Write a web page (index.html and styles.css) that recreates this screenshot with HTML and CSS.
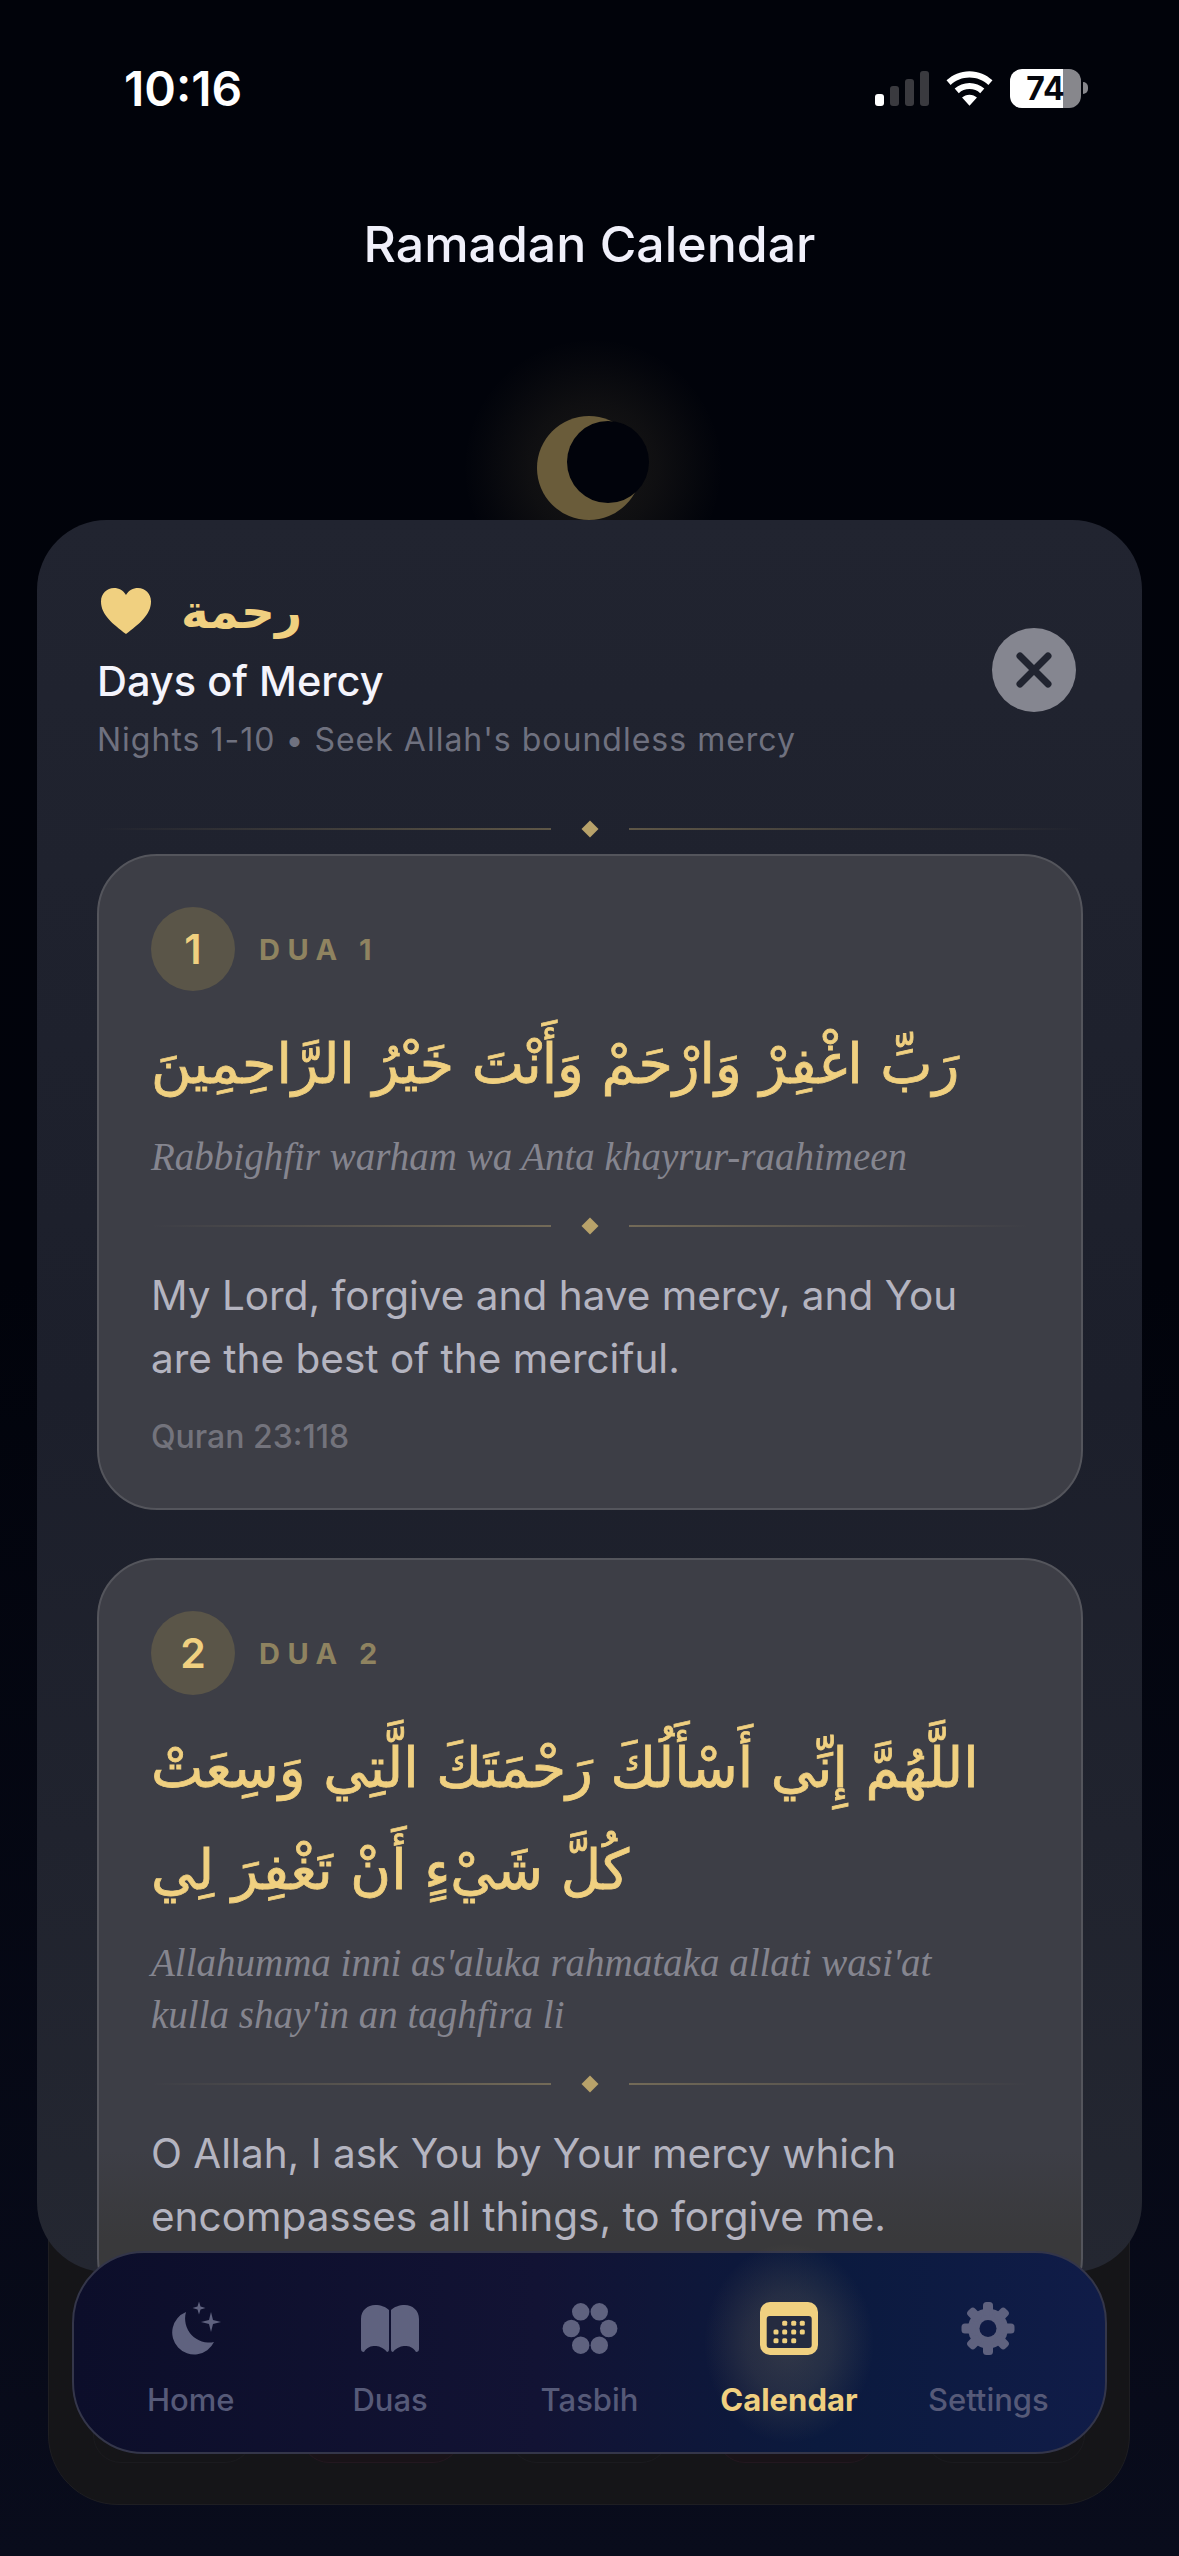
FILE: index.html
```html
<!DOCTYPE html>
<html lang="en">
<head>
    <meta charset="UTF-8">
    <meta name="viewport" content="width=device-width, initial-scale=1.0">
    <title>Ramadan Calendar</title>
    <link rel="stylesheet" href="styles.css">
</head>
<body>
    <div class="screen">
        <div class="status-bar">
            <span class="status-time">10:16</span>
            <div class="status-icons">
                <div class="signal">
                    <span class="bar bar-on bar-1"></span>
                    <span class="bar bar-2"></span>
                    <span class="bar bar-3"></span>
                    <span class="bar bar-4"></span>
                </div>
                <svg class="wifi" viewBox="0 0 46 34"><path fill="#fff" d="M23 0C14 0 6.500 3.400 0.500 9l4 4.500C9.500 9 16 6.300 23 6.300S36.500 9 41.500 13.500l4-4.500C39.500 3.400 32 0 23 0zM23 11.500c-5.600 0-10.500 2-14.500 5.600l4 4.500c2.800-2.500 6.400-4 10.500-4s7.700 1.500 10.500 4l4-4.500C33.500 13.500 28.600 11.500 23 11.500zM23 23c-2.900 0-5.400 1-7.300 2.800L23 34l7.300-8.200C28.400 24 25.900 23 23 23z"/></svg>
                <div class="battery"><span class="battery-num">74</span></div>
                <span class="battery-cap"></span>
            </div>
        </div>
        <h1 class="page-title">Ramadan Calendar</h1>
        <div class="moon-wrap">
            <div class="moon-glow"></div>
            <div class="moon"></div>
            <div class="moon-cut"></div>
        </div>

        <div class="back-sheet">
            <div class="ghost-row">
                <span class="ghost"></span>
                <span class="ghost ghost-pink"></span>
                <span class="ghost"></span>
                <span class="ghost ghost-pink"></span>
                <span class="ghost"></span>
            </div>
        </div>

        <div class="sheet">
            <div class="sheet-head">
                <div class="sheet-info">
                    <div class="sheet-arabic">
                        <svg class="heart" viewBox="0 0 50 46"><path fill="#f0d080" d="M25 46C12 36 0 27 0 13.500 0 5.500 6 0 13 0c5 0 9.500 2.500 12 7 2.500-4.500 7-7 12-7 7 0 13 5.500 13 13.500C50 27 38 36 25 46z"/></svg>
                        <span class="arabic-word" lang="ar" dir="rtl">رحمة</span>
                    </div>
                    <div class="sheet-title">Days of Mercy</div>
                    <div class="sheet-sub">Nights 1-10 • Seek Allah's boundless mercy</div>
                </div>
                <button class="close-btn">
                    <svg viewBox="0 0 36 36"><path d="M4 4L32 32M32 4L4 32" stroke="#212430" stroke-width="7" stroke-linecap="round"/></svg>
                </button>
            </div>
            <div class="divider sheet-divider"><span class="line line-l"></span><span class="diamond"></span><span class="line line-r"></span></div>

            <div class="dua-card">
                <div class="dua-head"><span class="dua-num">1</span><span class="dua-label">DUA 1</span></div>
                <p class="dua-arabic" lang="ar" dir="rtl">رَبِّ اغْفِرْ وَارْحَمْ وَأَنْتَ خَيْرُ الرَّاحِمِينَ</p>
                <p class="dua-translit">Rabbighfir warham wa Anta khayrur-raahimeen</p>
                <div class="divider"><span class="line line-l"></span><span class="diamond"></span><span class="line line-r"></span></div>
                <p class="dua-text">My Lord, forgive and have mercy, and You are the best of the merciful.</p>
                <p class="dua-ref">Quran 23:118</p>
            </div>

            <div class="dua-card dua-card-cut">
                <div class="dua-head"><span class="dua-num">2</span><span class="dua-label">DUA 2</span></div>
                <p class="dua-arabic" lang="ar" dir="rtl">اللَّهُمَّ إِنِّي أَسْأَلُكَ رَحْمَتَكَ الَّتِي وَسِعَتْ كُلَّ شَيْءٍ أَنْ تَغْفِرَ لِي</p>
                <p class="dua-translit">Allahumma inni as'aluka rahmataka allati wasi'at kulla shay'in an taghfira li</p>
                <div class="divider"><span class="line line-l"></span><span class="diamond"></span><span class="line line-r"></span></div>
                <p class="dua-text">O Allah, I ask You by Your mercy which encompasses all things, to forgive me.</p>
            </div>
        </div>

        <nav class="tab-bar">
            <div class="tab">
                <svg class="tab-icon" viewBox="0 0 60 56"><path fill="#5f627f" d="M25 11A22 22 0 1 0 53 41A24 24 0 0 1 25 11Z"/><path fill="#5f627f" d="M38 .5L39.500 5.500L44.500 7L39.500 8.500L38 13.500L36.500 8.500L31.500 7L36.500 5.500ZM50 11L52 19L60 21L52 23L50 31L48 23L40 21L48 19Z"/></svg>
                <span class="tab-label">Home</span>
            </div>
            <div class="tab">
                <svg class="tab-icon" viewBox="0 0 60 56"><g fill="#5f627f" transform="translate(1 4)"><path d="M3 47Q0 47 0 44V14C0 5 7 0 14 0C20 0 25 2 28 5V44Q28 47 26 47C22 42 17 41 14 41C10 41 6 42 3 47Z"/><path d="M55 47Q58 47 58 44V14C58 5 51 0 44 0C38 0 33 2 30 5V44Q30 47 32 47C36 42 41 41 44 41C48 41 52 42 55 47Z"/></g></svg>
                <span class="tab-label">Duas</span>
            </div>
            <div class="tab">
                <svg class="tab-icon" viewBox="0 0 60 56" fill="#5f627f"><circle cx="20.700" cy="10.800" r="8.700"/><circle cx="39.300" cy="10.800" r="8.700"/><circle cx="11.300" cy="27.500" r="8.700"/><circle cx="48.700" cy="27.500" r="8.700"/><circle cx="20.700" cy="44.200" r="8.700"/><circle cx="39.300" cy="44.200" r="8.700"/></svg>
                <span class="tab-label">Tasbih</span>
            </div>
            <div class="tab tab-active">
                <span class="tab-glow"></span>
                <svg class="tab-icon" viewBox="0 0 60 56"><rect x="1" y="1" width="58" height="53" rx="10" fill="#f0d080"/><rect x="7.700" y="15" width="45" height="32" rx="3" fill="#252b40"/><g fill="#f0d080"><rect x="23.200" y="19.800" width="5" height="5" rx="1.500"/><rect x="32.200" y="19.800" width="5" height="5" rx="1.500"/><rect x="40.800" y="19.800" width="5" height="5" rx="1.500"/><rect x="14.500" y="28.500" width="5" height="5" rx="1.500"/><rect x="23.200" y="28.500" width="5" height="5" rx="1.500"/><rect x="32.200" y="28.500" width="5" height="5" rx="1.500"/><rect x="40.800" y="28.500" width="5" height="5" rx="1.500"/><rect x="14.500" y="37.200" width="5" height="5" rx="1.500"/><rect x="23.200" y="37.200" width="5" height="5" rx="1.500"/><rect x="32.200" y="37.200" width="5" height="5" rx="1.500"/></g></svg>
                <span class="tab-label">Calendar</span>
            </div>
            <div class="tab">
                <svg class="tab-icon" viewBox="0 0 60 56"><g fill="#5f627f"><circle cx="30" cy="27.500" r="20"/><rect x="25" y="1" width="10" height="14" rx="3.500"/><rect x="25" y="1" width="10" height="14" rx="3.500" transform="rotate(45 30 27.500)"/><rect x="25" y="1" width="10" height="14" rx="3.500" transform="rotate(90 30 27.500)"/><rect x="25" y="1" width="10" height="14" rx="3.500" transform="rotate(135 30 27.500)"/><rect x="25" y="1" width="10" height="14" rx="3.500" transform="rotate(180 30 27.500)"/><rect x="25" y="1" width="10" height="14" rx="3.500" transform="rotate(225 30 27.500)"/><rect x="25" y="1" width="10" height="14" rx="3.500" transform="rotate(270 30 27.500)"/><rect x="25" y="1" width="10" height="14" rx="3.500" transform="rotate(315 30 27.500)"/></g><circle cx="30" cy="27.500" r="8.500" fill="#0f1a44"/></svg>
                <span class="tab-label">Settings</span>
            </div>
        </nav>
    </div>
</body>
</html>
```

FILE: styles.css
```css
* {
    box-sizing: border-box;
}

html, body {
    margin: 0;
    padding: 0;
}

body {
    width: 1179px;
    height: 2556px;
    overflow: hidden;
    font-family: Inter, "Noto Sans", sans-serif;
    background: #02030b;
}

.screen {
    position: relative;
    width: 1179px;
    height: 2556px;
    overflow: hidden;
    background: linear-gradient(180deg, #01030a 0%, #01030b 50%, #090c1c 100%);
}

/* status bar */
.status-bar {
    display: flex;
    justify-content: space-between;
    align-items: center;
    height: 54px;
    margin-top: 61px;
    padding: 0 91px 0 124px;
}

.status-time {
    font-size: 48px;
    font-weight: 600;
    color: #fff;
}

.status-icons {
    display: flex;
    align-items: center;
}

.signal {
    display: flex;
    align-items: flex-end;
    gap: 6px;
    height: 35px;
    margin-right: 17px;
}

.bar {
    width: 9px;
    border-radius: 3px;
    background: #3a3a3f;
}

.bar-on { background: #fff; }
.bar-1 { height: 12px; }
.bar-2 { height: 20px; }
.bar-3 { height: 27px; }
.bar-4 { height: 35px; }

.wifi {
    width: 47px;
    height: 35px;
    margin-right: 17px;
}

.battery {
    width: 71px;
    height: 39px;
    border-radius: 12px;
    background: linear-gradient(90deg, #fff 0 74.600%, #87878c 74.600% 100%);
    display: flex;
    align-items: center;
    justify-content: center;
}

.battery-num {
    font-size: 32px;
    font-weight: 700;
    color: #05060c;
}

.battery-cap {
    width: 5px;
    height: 12px;
    margin-left: 2px;
    border-radius: 0 5px 5px 0;
    background: #87878c;
}

.page-title {
    margin: 0;
    padding-top: 99px;
    text-align: center;
    font-size: 50px;
    line-height: 60px;
    font-weight: 500;
    color: #f0f0fa;
}

/* crescent */
.moon-wrap {
    position: absolute;
    left: 537px;
    top: 416px;
    width: 112px;
    height: 104px;
}

.moon-glow {
    position: absolute;
    left: -74px;
    top: -78px;
    width: 260px;
    height: 260px;
    border-radius: 50%;
    background: radial-gradient(closest-side, rgba(240,208,128,0.1) 0%, rgba(240,208,128,0.06) 50%, rgba(240,208,128,0.015) 85%, rgba(240,208,128,0) 100%);
}

.moon {
    position: absolute;
    left: 0;
    top: 0;
    width: 104px;
    height: 104px;
    border-radius: 50%;
    background: #6a5c3a;
}

.moon-cut {
    position: absolute;
    left: 30px;
    top: 5px;
    width: 82px;
    height: 82px;
    border-radius: 50%;
    background: #01030b;
}

/* sheet behind the dialog */
.back-sheet {
    position: absolute;
    left: 48px;
    top: 1900px;
    width: 1082px;
    height: 605px;
    border-radius: 70px;
    border: 1px solid #1e1e22;
    background: #151518;
}

.ghost-row {
    display: flex;
    justify-content: space-between;
    padding: 0 44px;
    height: 562px;
}

.ghost {
    width: 160px;
    height: 100%;
    border-radius: 28px;
    border: 1px solid #1b1b1f;
}

.ghost-pink {
    border-color: #231820;
    background: #191318;
}

/* dialog */
.sheet {
    position: absolute;
    left: 37px;
    top: 520px;
    width: 1105px;
    height: 1752px;
    padding: 59px 59px 0 60px;
    border-radius: 70px;
    overflow: hidden;
    background: linear-gradient(180deg, #212430 0%, #1c1f2b 50%, #242731 100%);
}

.sheet-head {
    display: flex;
    justify-content: space-between;
    align-items: center;
    padding-right: 7px;
}

.sheet-arabic {
    display: flex;
    align-items: center;
    gap: 30px;
    height: 64px;
    padding-left: 4px;
}

.heart {
    width: 50px;
    height: 46px;
}

.arabic-word {
    font-family: "DejaVu Sans", sans-serif;
    font-size: 47px;
    font-weight: 700;
    color: #f0d080;
}

.sheet-title {
    margin-top: 14px;
    font-size: 41.500px;
    line-height: 48px;
    font-weight: 500;
    color: #f4f4fc;
}

.sheet-sub {
    margin-top: 15px;
    font-size: 32px;
    line-height: 40px;
    letter-spacing: 1px;
    color: #6f717f;
}

.close-btn {
    width: 84px;
    height: 84px;
    padding: 24px;
    border: none;
    border-radius: 50%;
    background: #858690;
    display: flex;
    align-items: center;
    justify-content: center;
}

.close-btn svg {
    width: 36px;
    height: 36px;
    flex: none;
}

.divider {
    display: flex;
    align-items: center;
    justify-content: center;
    height: 16px;
    margin: 0;
}

.sheet-divider {
    margin-top: 61px;
    margin-bottom: 17px;
}

.line {
    flex: 1;
    height: 2px;
}

.line-l {
    background: linear-gradient(90deg, rgba(240,208,128,0), rgba(240,208,128,0.3));
}

.line-r {
    background: linear-gradient(90deg, rgba(240,208,128,0.3), rgba(240,208,128,0));
}

.diamond {
    width: 12px;
    height: 12px;
    margin: 0 33px;
    transform: rotate(45deg);
    background: #b8a26a;
}

/* dua cards */
.dua-card {
    height: 656px;
    padding: 51px 52px 0;
    margin-bottom: 48px;
    border: 2px solid #54555c;
    border-radius: 60px;
    background: #3d3e46;
}

.dua-card-cut {
    height: 760px;
    background: linear-gradient(180deg, #3d3e46 0%, #3d3e46 78%, #39393b 90%);
}

.dua-head {
    display: flex;
    align-items: center;
    gap: 24px;
}

.dua-num {
    display: flex;
    align-items: center;
    justify-content: center;
    width: 84px;
    height: 84px;
    border-radius: 50%;
    background: #5a5548;
    font-size: 41px;
    font-weight: 600;
    color: #f0d080;
}

.dua-label {
    font-size: 29px;
    font-weight: 700;
    letter-spacing: 7.500px;
    color: #8f8360;
}

.dua-arabic {
    margin: 22px 0 0;
    font-family: "DejaVu Sans", sans-serif;
    font-size: 55.500px;
    line-height: 102px;
    text-align: left;
    color: #f0d080;
    -webkit-text-stroke: 0.8px #f0d080;
}

.dua-translit {
    max-width: 840px;
    margin: 16px 0 0;
    font-family: "Liberation Serif", serif;
    font-style: italic;
    font-size: 39px;
    line-height: 52px;
    color: #85858f;
}

.dua-card .divider {
    margin-top: 35px;
}

.dua-text {
    margin: 30px 0 0;
    font-size: 40.500px;
    line-height: 63px;
    color: #b4b4c0;
}

.dua-ref {
    margin: 27px 0 0;
    font-size: 32px;
    line-height: 40px;
    font-weight: 500;
    color: #73737c;
}

/* bottom nav */
.tab-bar {
    position: absolute;
    left: 72px;
    top: 2251px;
    width: 1035px;
    height: 203px;
    display: flex;
    padding: 0 17px;
    border: 2px solid #34364a;
    border-radius: 72px;
    background: linear-gradient(90deg, #0c0e2a 0%, #121334 45%, #0b1a3e 72%, #101c48 100%);
}

.tab {
    position: relative;
    flex: 1;
    display: flex;
    flex-direction: column;
    align-items: center;
    padding-top: 48px;
}

.tab-icon {
    position: relative;
    width: 60px;
    height: 56px;
}

.tab-label {
    position: relative;
    margin-top: 24px;
    font-size: 31px;
    line-height: 38px;
    font-weight: 500;
    color: #565a78;
}

.tab-active .tab-label {
    font-weight: 700;
    color: #f0d080;
}

.tab-glow {
    position: absolute;
    left: 15px;
    top: -10px;
    width: 170px;
    height: 200px;
    border-radius: 50%;
    background: radial-gradient(closest-side, rgba(240,208,128,0.17) 0%, rgba(240,208,128,0.11) 50%, rgba(240,208,128,0.03) 85%, rgba(240,208,128,0) 100%);
}
```
